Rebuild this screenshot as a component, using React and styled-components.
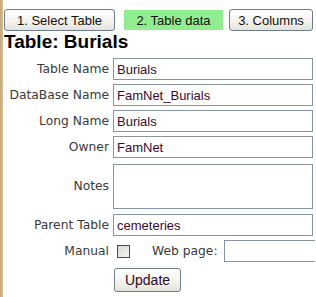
import React from "react";
import styled, { createGlobalStyle } from "styled-components";

const GlobalStyle = createGlobalStyle`
  html, body {
    margin: 0;
    padding: 0;
    background: #ffffff;
    overflow: hidden;
  }
  body {
    font-family: "DejaVu Sans", Verdana, sans-serif;
  }
`;

const Page = styled.div`
  display: flex;
  width: 316px;
  min-height: 297px;
`;

const Strip = styled.div`
  width: 3px;
  flex: none;
  background: linear-gradient(to right, #c2a878, #d4bf98);
`;

const Content = styled.div`
  flex: 1;
  min-width: 0;
  overflow: hidden;
  padding-top: 9px;
`;

const Tabs = styled.div`
  display: flex;
  align-items: center;
  height: 22px;
`;

const TabButton = styled.button`
  box-sizing: border-box;
  width: ${(p) => p.$w}px;
  height: ${(p) => (p.$active ? 20 : 22)}px;
  margin-left: ${(p) => p.$ml}px;
  padding: 0;
  font-family: "Liberation Sans", Arial, sans-serif;
  font-size: 13px;
  color: #111;
  border-radius: ${(p) => (p.$active ? 0 : 3)}px;
  border: 1px solid ${(p) => (p.$active ? "#90ee90" : "#6f7d8c")};
  background: ${(p) =>
    p.$active ? "#90ee90" : "linear-gradient(#fefefd, #f3f2ee 60%, #e3e2da)"};
`;

const Title = styled.h3`
  margin: 0 0 0 1px;
  font-family: "Liberation Sans", Arial, sans-serif;
  font-weight: bold;
  font-size: 19px;
  line-height: 22px;
  color: #000;
`;

const Form = styled.div`
  display: grid;
  grid-template-columns: 106px 1fr;
  grid-template-rows: 22px 22px 22px 22px 48px 22px 22px 28px;
  column-gap: 4px;
  row-gap: 4px;
  align-items: center;
  margin-top: 5px;
`;

const Label = styled.div`
  text-align: right;
  font-size: 12.3px;
  color: #3a3a3a;
  white-space: nowrap;
`;

const fieldBase = `
  box-sizing: border-box;
  border: 1px solid #8696a6;
  background: #fff;
  font-family: "Liberation Sans", Arial, sans-serif;
  font-size: 13px;
  color: #3c0a2c;
  padding: 0 3px;
  outline: none;
  margin: 0;
`;

const TextInput = styled.input`
  ${fieldBase}
  width: ${(p) => p.$w || 200}px;
  height: 22px;
`;

const Notes = styled.textarea`
  ${fieldBase}
  width: 200px;
  height: 45px;
  resize: none;
`;

const Inline = styled.div`
  display: flex;
  align-items: center;
  overflow: hidden;
`;

const Check = styled.input`
  appearance: none;
  box-sizing: border-box;
  flex: none;
  width: 13px;
  height: 13px;
  margin: 0 0 0 4px;
  border: 1px solid #2a4f78;
  background: linear-gradient(135deg, #d8d8d2, #f6f6f4);
`;

const InlineLabel = styled.span`
  font-size: 12.3px;
  color: #3a3a3a;
  margin-left: 22px;
  margin-right: 6px;
  white-space: nowrap;
`;

const WebInput = styled(TextInput)`
  flex: none;
  border-right: none;
`;

const UpdateButton = styled.button`
  box-sizing: border-box;
  width: 67px;
  height: 24px;
  margin-left: 1px;
  padding: 0;
  font-family: "Liberation Sans", Arial, sans-serif;
  font-size: 14px;
  color: #2a0a1e;
  border-radius: 3px;
  border: 1px solid #6f7d8c;
  background: linear-gradient(#fefefd, #f3f2ee 60%, #e3e2da);
`;

const rows = [
  ["Table Name", "Burials"],
  ["DataBase Name", "FamNet_Burials"],
  ["Long Name", "Burials"],
  ["Owner", "FamNet"],
];

export default function App() {
  return (
    <Page>
      <GlobalStyle />
      <Strip />
      <Content>
        <Tabs>
          <TabButton $w={111} $ml={1}>1. Select Table</TabButton>
          <TabButton $w={99} $ml={9} $active>2. Table data</TabButton>
          <TabButton $w={84} $ml={6}>3. Columns</TabButton>
        </Tabs>
        <Title>Table: Burials</Title>
        <Form>
          {rows.map(([label, value]) => (
            <React.Fragment key={label}>
              <Label>{label}</Label>
              <TextInput defaultValue={value} />
            </React.Fragment>
          ))}
          <Label>Notes</Label>
          <Notes />
          <Label>Parent Table</Label>
          <TextInput defaultValue="cemeteries" />
          <Label>Manual</Label>
          <Inline>
            <Check type="checkbox" />
            <InlineLabel>Web page:</InlineLabel>
            <WebInput $w={91} />
          </Inline>
          <div />
          <div>
            <UpdateButton>Update</UpdateButton>
          </div>
        </Form>
      </Content>
    </Page>
  );
}
